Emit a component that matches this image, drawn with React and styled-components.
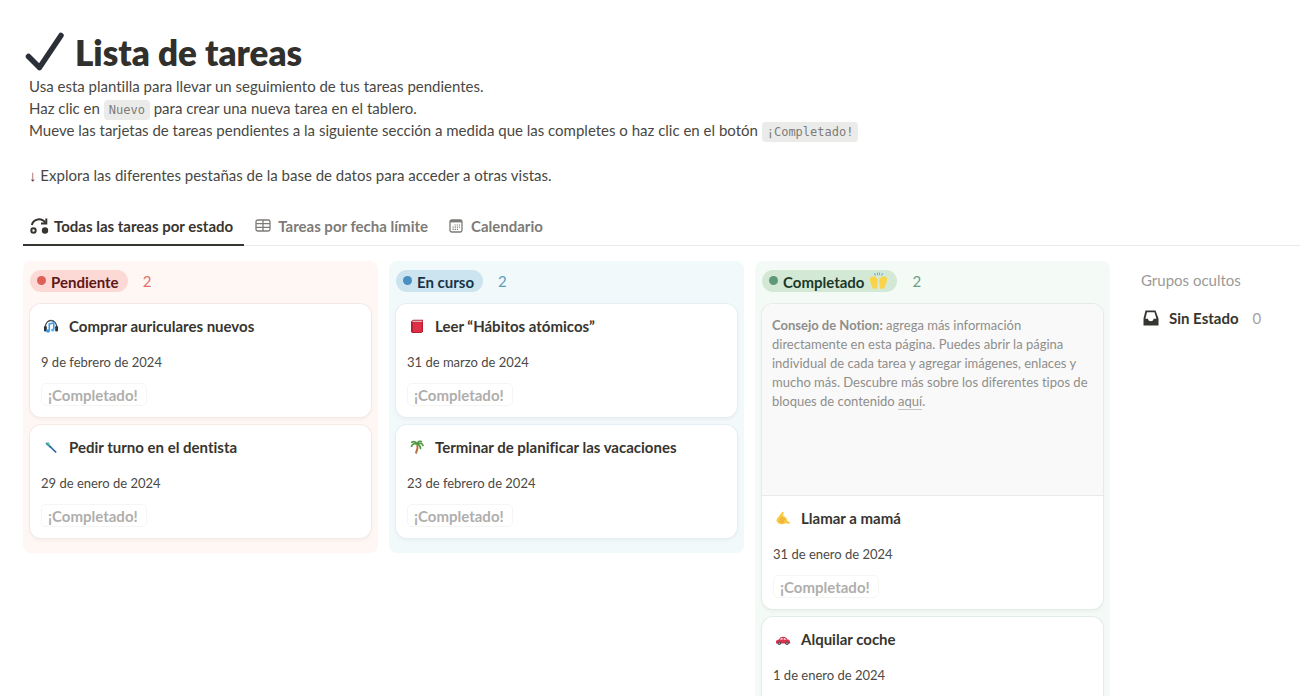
import React from "react";
import styled, { createGlobalStyle } from "styled-components";

const GlobalStyle = createGlobalStyle`
  *, *::before, *::after { box-sizing: border-box; }
  body {
    margin: 0;
    background: #fff;
    color: #37352f;
    font-family: Lato, "Open Sans", sans-serif;
    font-size: 15px;
    line-height: 22px;
    font-variant-ligatures: none;
  }
  h1, h2, h3, p { margin: 0; }
`;

const Page = styled.main`
  padding: 29px 0 0 23px;
`;

const TitleRow = styled.header`
  display: flex;
  align-items: center;
  gap: 9px;
  height: 46px;
  padding-left: 2px;
`;

const Title = styled.h1`
  font-size: 35px;
  line-height: 46px;
  font-weight: 800;
  color: #32302c;
`;

const Intro = styled.p`
  padding: 0 6px;
  color: #494844;
`;

const Hint = styled(Intro)`
  margin-top: 23px;
`;

const Arrow = styled.span`
  font-family: "Liberation Sans", sans-serif;
  line-height: 15px;
`;

const Code = styled.code`
  padding: 3px 5px;
  border-radius: 4px;
  background: #ebebea;
  color: #7d7c78;
  font-family: "DejaVu Sans Mono", "Liberation Mono", monospace;
  font-size: 12px;
  line-height: 12px;
`;

const Tabs = styled.nav`
  display: flex;
  gap: 8px;
  margin-top: 21px;
  border-bottom: 1px solid #e9e9e7;
`;

const Tab = styled.button`
  display: flex;
  align-items: center;
  gap: ${(p) => (p.$active ? 5 : 7)}px;
  height: 39px;
  margin-bottom: -1px;
  padding: ${(p) => (p.$active ? "0 11px 0 7px" : "0 9px 0 3px")};
  border: 0;
  border-bottom: 2px solid ${(p) => (p.$active ? "#37352f" : "transparent")};
  background: none;
  color: ${(p) => (p.$active ? "#37352f" : "#7d7b77")};
  font: inherit;
  font-weight: 700;
  cursor: pointer;
`;

const Board = styled.div`
  display: grid;
  grid-template-columns: repeat(3, minmax(0, 1fr)) 179px;
  align-items: start;
  gap: 11px;
  margin-top: 15px;
`;

const themes = {
  red: { bg: "#fef7f4", pill: "#fcd9d5", dot: "#dd5f58", text: "#5d1715", count: "#e0716b", line: "#f6e9e5" },
  blue: { bg: "#f2f9fb", pill: "#cbe4ef", dot: "#4a8fc2", text: "#183347", count: "#5a9fbb", line: "#e4eff3" },
  green: { bg: "#f4faf6", pill: "#d3e9d5", dot: "#5f9878", text: "#1c3829", count: "#6b9e85", line: "#e4ece6" },
};

const Column = styled.section`
  display: flex;
  flex-direction: column;
  gap: 8px;
  padding: 9px 7px 15px;
  border-radius: 8px;
  background: ${(p) => p.$tone.bg};
`;

const ColumnHeader = styled.header`
  display: flex;
  align-items: center;
  gap: 15px;
  margin-bottom: 4px;
`;

const Pill = styled.h2`
  display: flex;
  align-items: center;
  gap: 5px;
  height: 22px;
  padding: 1px 9px 0 7px;
  border-radius: 11px;
  background: ${(p) => p.$tone.pill};
  color: ${(p) => p.$tone.text};
  font-size: 15px;
  line-height: 22px;
  font-weight: 700;
`;

const Dot = styled.span`
  width: 9px;
  height: 9px;
  margin-bottom: 2px;
  border-radius: 50%;
  background: ${(p) => p.$tone.dot};
`;

const Count = styled.span`
  color: ${(p) => p.$color};
`;

const CardBox = styled.article`
  overflow: hidden;
  border-radius: 11px;
  background: #fff;
  box-shadow: 0 0 0 1px ${(p) => p.$tone.line}, 0 2px 4px rgba(15, 15, 15, 0.05);
`;

const Preview = styled.div`
  height: 192px;
  padding: 12px 8px 12px 10px;
  border-bottom: 1px solid #e8e9e8;
  background: #f9f9f9;
  color: #8f8e8b;
  font-size: 13px;
  line-height: 19px;
`;

const PreviewLink = styled.a`
  border-bottom: 1px solid #c4c4c2;
  color: inherit;
  text-decoration: none;
`;

const CardBody = styled.div`
  display: flex;
  flex-direction: column;
  align-items: flex-start;
  padding: 11px;
`;

const CardTitle = styled.h3`
  display: flex;
  align-items: center;
  gap: 10px;
  padding-left: 2px;
  font-size: 15px;
  line-height: 22px;
  font-weight: 700;
`;

const CardDate = styled.time`
  margin-top: 15px;
  font-size: 13px;
  line-height: 20px;
  color: #4b4a46;
`;

const DoneButton = styled.button`
  margin-top: 11px;
  height: 23px;
  padding: 0 8px 0 6px;
  border: 1px solid #f5f5f4;
  border-radius: 5px;
  background: #fff;
  color: #afaeac;
  font: inherit;
  font-weight: 700;
  line-height: 20px;
  cursor: pointer;
`;

const Hidden = styled.aside`
  display: flex;
  flex-direction: column;
  gap: 16px;
  padding: 8px 0 0 20px;
  color: #9b9a97;
`;

const HiddenRow = styled.button`
  display: flex;
  align-items: center;
  gap: 9px;
  padding: 0;
  border: 0;
  background: none;
  color: #37352f;
  font: inherit;
  font-weight: 700;
`;

const HiddenCount = styled.span`
  margin-left: 5px;
  color: #a3a2a0;
  font-weight: 400;
`;

const CheckMark = () => (
  <svg width="41" height="42" viewBox="0 0 41 42" fill="none" aria-hidden="true">
    <path d="M3.500 25.500L14.500 36.500L36 4.500" stroke="#2b2f38" strokeWidth="5.500" strokeLinecap="round" strokeLinejoin="round" />
  </svg>
);

const StatusIcon = () => (
  <svg width="19" height="18" viewBox="0 0 19 18" fill="none" stroke="#37352f" strokeWidth="2" aria-hidden="true">
    <circle cx="3.500" cy="13.500" r="2.200" />
    <circle cx="15" cy="13.500" r="3.200" fill="#37352f" stroke="none" />
    <path d="M1.800 8C3.500 1.500 11.500 .3 15.500 6" />
    <path d="M16.300 1.500V6.600H11" />
  </svg>
);

const TableIcon = () => (
  <svg width="16" height="16" viewBox="0 0 16 16" fill="none" stroke="#7d7b77" strokeWidth="1.300" aria-hidden="true">
    <rect x="1" y="2" width="14" height="11" rx="1.800" />
    <path d="M1 5.600H15M1 9.300H15M8 2V13" />
  </svg>
);

const CalendarIcon = () => (
  <svg width="16" height="16" viewBox="0 0 16 16" fill="none" stroke="#7d7b77" strokeWidth="1.300" aria-hidden="true">
    <rect x="2" y="2" width="12" height="12" rx="1.800" />
    <path d="M2 3.200H14" strokeWidth="2.400" />
    <path d="M6.500 7H12M4.500 9.200H12M4.500 11.400H10" strokeWidth="1.200" strokeDasharray="1.200 1" />
  </svg>
);

const InboxIcon = () => (
  <svg width="19" height="18" viewBox="0 0 19 18" aria-hidden="true">
    <path fill="#37352f" fillRule="evenodd" d="M4.500 1.500H14.500L17.500 9.500V16.500H2.500V9.500ZM6 3.300L4.400 9.800H6.900C7.300 11.500 8.300 12.300 9.800 12.300S12.300 11.500 12.700 9.800H15.400L13.500 3.300Z" />
  </svg>
);

const Emoji = ({ size = 16, children }) => (
  <svg width={size} height={size} viewBox="0 0 16 16" fill="none" aria-hidden="true">{children}</svg>
);

const Headphones = () => (
  <Emoji>
    <path d="M2.300 10C1.800 0 14.200 0 13.700 10" stroke="#4b535c" strokeWidth="1.300" />
    <rect x="1" y="8" width="2.800" height="5.500" rx="1.300" fill="#2d333a" />
    <rect x="12.200" y="8" width="2.800" height="5.500" rx="1.300" fill="#2d333a" />
    <path d="M6.300 12.500V6L10.800 5V11.500" stroke="#3b9be8" strokeWidth="1.600" />
    <ellipse cx="5" cy="13" rx="2" ry="1.700" fill="#3b9be8" />
    <ellipse cx="9.700" cy="12" rx="1.700" ry="1.500" fill="#5db3f0" />
  </Emoji>
);

const Toothbrush = () => (
  <Emoji>
    <path d="M2.500 4.500L5.500 2.700L7.200 5.200L5.300 7Z" fill="#8bcfc0" />
    <path d="M3.500 4.500L7.500 8" stroke="#3a9a9c" strokeWidth="1.700" strokeLinecap="round" />
    <path d="M7 7.500L12.700 13" stroke="#2565a8" strokeWidth="1.700" strokeLinecap="round" />
  </Emoji>
);

const Book = () => (
  <Emoji>
    <path d="M2 3.500L4 1.800H14V13.200L12.500 15H3.200L2 13.800Z" fill="#b51f34" />
    <path d="M3.500 2.700H13.200V3.800H3.200Z" fill="#f3e9e9" />
    <path d="M4 4.200H12.700V14H4Z" fill="#e22f48" />
  </Emoji>
);

const Palm = () => (
  <Emoji>
    <path d="M8.300 5C9 8 8.500 11 6.800 14.500" stroke="#b87345" strokeWidth="1.900" />
    <path d="M8.500 5.400C6 3.800 3.800 4.500 2.500 7.300M8.500 5.200C6.700 2.400 4.800 2 2.800 3.200M8.500 5.200C8.700 2.500 10.500 1.800 12.400 2.500M8.500 5.200C11 3.500 13.200 4.200 14 6.500M8.500 5.300C10.500 6 11.500 7.500 11.500 9.500" stroke="#4f9a3e" strokeWidth="1.700" strokeLinecap="round" />
  </Emoji>
);

const CallHand = () => (
  <Emoji>
    <path d="M2.200 8.500L7.200 2C8.200 1.200 9 2 8.600 3.200L8 5.500L11 7.500L12.500 11L15 12.500C15.500 13.500 14.500 14 13.500 13.800L10.500 13.300C8 15 4 14.500 2.500 12.500C1.300 11 1.200 9.800 2.200 8.500Z" fill="#fac943" />
    <path d="M6 7.500L9.500 9.500M5 9.300L8.700 11.400M4.500 11.200L7.500 12.700" stroke="#e29b32" strokeWidth=".9" strokeLinecap="round" />
  </Emoji>
);

const Car = () => (
  <Emoji>
    <path d="M1 12.500V10C1.500 9 3 8.800 4 8.500C5 6.500 6 5.800 8.200 5.800C10.500 5.800 11.500 6.800 12.500 8.400C14.500 8.700 15.300 9.700 15.300 12.500Z" fill="#d9344f" />
    <path d="M5 8.600C5.700 7.200 6.400 6.900 7.600 6.900V8.700ZM8.700 6.900C10 6.900 10.700 7.500 11.300 8.700H8.700Z" fill="#f0dfe2" />
    <circle cx="4.300" cy="12.300" r="1.700" fill="#473f47" />
    <circle cx="12" cy="12.300" r="1.700" fill="#473f47" />
    <circle cx="4.300" cy="12.300" r=".7" fill="#ccc" />
    <circle cx="12" cy="12.300" r=".7" fill="#ccc" />
  </Emoji>
);

const RaisedHands = () => (
  <Emoji size={19}>
    <path d="M1.500 4C.8 5.500 .6 7 1.300 9L3.300 14H6.500L7.200 8.500C7.500 6.500 7 5.200 6 4.800L4.500 3.500Z" fill="#fbd348" />
    <path d="M14.500 4C15.200 5.500 15.400 7 14.700 9L12.700 14H9.500L8.800 8.500C8.500 6.500 9 5.200 10 4.800L11.500 3.500Z" fill="#fbd348" />
    <path d="M4.500 1.300L5.500 2.600M7 .8L7.300 2.300M9 .8L8.700 2.300M11.500 1.300L10.500 2.600" stroke="#6db0d8" strokeWidth=".9" strokeLinecap="round" />
  </Emoji>
);

const columns = [
  {
    name: "Pendiente", tone: themes.red,
    cards: [
      { icon: Headphones, title: "Comprar auriculares nuevos", date: "9 de febrero de 2024", iso: "2024-02-09" },
      { icon: Toothbrush, title: "Pedir turno en el dentista", date: "29 de enero de 2024", iso: "2024-01-29" },
    ],
  },
  {
    name: "En curso", tone: themes.blue,
    cards: [
      { icon: Book, title: "Leer “Hábitos atómicos”", date: "31 de marzo de 2024", iso: "2024-03-31" },
      { icon: Palm, title: "Terminar de planificar las vacaciones", date: "23 de febrero de 2024", iso: "2024-02-23" },
    ],
  },
  {
    name: "Completado", tone: themes.green, emoji: RaisedHands,
    cards: [
      { icon: CallHand, title: "Llamar a mamá", date: "31 de enero de 2024", iso: "2024-01-31", preview: true },
      { icon: Car, title: "Alquilar coche", date: "1 de enero de 2024", iso: "2024-01-01" },
    ],
  },
];

const Card = ({ card, tone }) => {
  const Icon = card.icon;
  return (
    <CardBox $tone={tone}>
      {card.preview && (
        <Preview>
          <b>Consejo de Notion:</b> agrega más información directamente en esta página. Puedes abrir la página
          individual de cada tarea y agregar imágenes, enlaces y mucho más. Descubre más sobre los diferentes tipos
          de bloques de contenido <PreviewLink href="#bloques">aquí</PreviewLink>.
        </Preview>
      )}
      <CardBody>
        <CardTitle><Icon />{card.title}</CardTitle>
        <CardDate dateTime={card.iso}>{card.date}</CardDate>
        <DoneButton type="button">¡Completado!</DoneButton>
      </CardBody>
    </CardBox>
  );
};

export default function App() {
  return (
    <>
      <GlobalStyle />
      <Page>
        <TitleRow>
          <CheckMark />
          <Title>Lista de tareas</Title>
        </TitleRow>
        <Intro>Usa esta plantilla para llevar un seguimiento de tus tareas pendientes.</Intro>
        <Intro>Haz clic en <Code>Nuevo</Code> para crear una nueva tarea en el tablero.</Intro>
        <Intro>
          Mueve las tarjetas de tareas pendientes a la siguiente sección a medida que las completes o haz clic en el
          botón <Code>¡Completado!</Code>
        </Intro>
        <Hint><Arrow>↓</Arrow> Explora las diferentes pestañas de la base de datos para acceder a otras vistas.</Hint>
        <Tabs>
          <Tab type="button" $active><StatusIcon />Todas las tareas por estado</Tab>
          <Tab type="button"><TableIcon />Tareas por fecha límite</Tab>
          <Tab type="button"><CalendarIcon />Calendario</Tab>
        </Tabs>
        <Board>
          {columns.map(({ name, tone, emoji: PillEmoji, cards }) => (
            <Column key={name} $tone={tone}>
              <ColumnHeader>
                <Pill $tone={tone}><Dot $tone={tone} />{name}{PillEmoji && <PillEmoji />}</Pill>
                <Count $color={tone.count}>{cards.length}</Count>
              </ColumnHeader>
              {cards.map((card) => <Card key={card.title} card={card} tone={tone} />)}
            </Column>
          ))}
          <Hidden>
            <span>Grupos ocultos</span>
            <HiddenRow type="button"><InboxIcon />Sin Estado <HiddenCount>0</HiddenCount></HiddenRow>
          </Hidden>
        </Board>
      </Page>
    </>
  );
}
